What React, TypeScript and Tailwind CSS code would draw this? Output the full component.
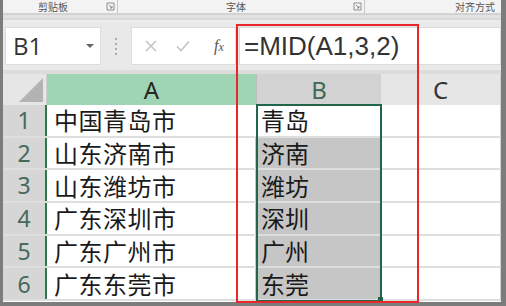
import React from "react";

const cn = '"Noto Sans CJK SC", sans-serif';

const rows = [
  ["中国青岛市", "青岛"],
  ["山东济南市", "济南"],
  ["山东潍坊市", "潍坊"],
  ["广东深圳市", "深圳"],
  ["广东广州市", "广州"],
  ["广东东莞市", "东莞"],
];

const Launcher = () => (
  <svg width="9" height="9" viewBox="0 0 9 9" className="text-[#777]">
    <path d="M1 8V1h7v7z" fill="none" stroke="currentColor" strokeWidth="0.8" />
    <path d="M3 3l3 3M6 4v2H4" fill="none" stroke="currentColor" strokeWidth="0.8" />
  </svg>
);

export default function App() {
  return (
    <div className="w-[506px] h-[306px] bg-[#7c7c7c] pl-[3px] pr-[5px] pb-[4px] overflow-hidden">
      <div className="relative h-full bg-[#e9e9e9] flex flex-col" style={{ fontFamily: cn }}>
        {/* ribbon group labels */}
        <div className="h-[13px] bg-[#f3f3f3] flex items-center text-[10px] leading-[12px] text-[#555]">
          <div className="w-[114px] flex items-center pl-[35px]">
            <span className="w-[68px]">剪贴板</span>
            <Launcher />
          </div>
          <div className="w-px h-full bg-[#c9c9c9]" />
          <div className="w-[246px] flex items-center">
            <span className="ml-[108px] w-[127px]">字体</span>
            <Launcher />
          </div>
          <div className="w-px h-full bg-[#c9c9c9]" />
          <div className="flex-1 text-right pr-[6px]">对齐方式</div>
        </div>
        <div className="h-[9px] flex flex-col">
          <div className="h-[2px] bg-[#d2d2d2]" />
          <div className="h-[3px] bg-[#e2e2e2]" />
          <div className="h-[2px] bg-[#d9d9d9]" />
          <div className="h-[2px] bg-[#ececec]" />
        </div>
        {/* formula bar */}
        <div className="h-[48px] flex items-center pt-[4px] pb-[4px]">
          <div className="ml-[2px] w-[96px] h-[38px] bg-white border border-[#dcdcdc] flex items-center justify-between pl-[7px] pr-[6px]">
            <span className="text-[24px] leading-none text-[#333]" style={{ fontFamily: '"Open Sans", sans-serif' }}>B1</span>
            <span className="w-0 h-0 border-l-[4px] border-r-[4px] border-t-[4px] border-l-transparent border-r-transparent border-t-[#666]" />
          </div>
          <div className="w-[30px] flex flex-col items-center gap-[3px]">
            <span className="w-[2px] h-[2px] bg-[#aaa]" />
            <span className="w-[2px] h-[2px] bg-[#aaa]" />
            <span className="w-[2px] h-[2px] bg-[#aaa]" />
            <span className="w-[2px] h-[2px] bg-[#aaa]" />
          </div>
          <div className="w-[105px] h-[38px] bg-white border border-[#dcdcdc] flex items-center">
            <svg width="12" height="12" viewBox="0 0 12 12" className="ml-[13px]">
              <path d="M1 1l10 10M11 1L1 11" stroke="#c4c4c4" strokeWidth="1.6" />
            </svg>
            <svg width="14" height="12" viewBox="0 0 14 12" className="ml-[19px]">
              <path d="M1 6.5l4 4L13 1.5" fill="none" stroke="#c4c4c4" strokeWidth="1.6" />
            </svg>
            <span className="ml-[24px] text-[16px] italic text-[#555]" style={{ fontFamily: '"Liberation Serif", serif' }}>
              f<span className="text-[12px]">x</span>
            </span>
          </div>
          <div className="ml-[3px] flex-1 h-[38px] bg-white border border-[#dcdcdc] flex items-center pl-[4px]">
            <span className="text-[26px] leading-none text-[#333]" style={{ fontFamily: '"Liberation Sans", sans-serif' }}>=MID(A1,3,2)</span>
          </div>
        </div>
        <div className="h-[4px] bg-[#dcdcdc]" />
        {/* grid */}
        <div className="flex-1 flex flex-col bg-white">
          <div className="h-[31px] flex bg-[#e6e6e6]">
            <div className="w-[44px] relative border-r border-[#cfcfcf]">
              <svg width="26" height="26" viewBox="0 0 26 26" className="absolute right-[2px] bottom-[2px]">
                <path d="M25 1V25H1z" fill="#b3b3b3" />
              </svg>
            </div>
            <div className="w-[209px] bg-[#9fd4b4] flex items-center justify-center text-[24px] text-[#262626]" style={{ fontFamily: '"Noto Sans", sans-serif' }}>A</div>
            <div className="w-[125px] bg-[#d2d2d2] border-l border-[#bdbdbd] flex items-center justify-center text-[24px] text-[#3f6a52]" style={{ fontFamily: '"Noto Sans", sans-serif' }}>B</div>
            <div className="flex-1 flex items-center justify-center text-[24px] text-[#333] border-r border-[#cfcfcf]" style={{ fontFamily: '"Noto Sans", sans-serif' }}>C</div>
          </div>
          {rows.map(([a, b], i) => (
            <div key={i} className="h-[32.7px] flex border-b-2 border-[#dedede]">
              <div className="w-[44px] bg-[#d6d6d6] flex items-center justify-center text-[23px] text-[#45695a] border-r-2 border-[#2f7a4d]" style={{ fontFamily: '"Noto Sans", sans-serif' }}>
                {i + 1}
              </div>
              <div className="w-[208px] flex items-center pl-[7px] text-[24px] tracking-[0.5px] text-[#1a1a1a]">{a}</div>
              <div className={`w-[125px] flex items-center pl-[6px] text-[24px] text-[#1a1a1a] ${i === 0 ? "bg-white" : "bg-[#c6c6c6]"}`}>{b}</div>
              <div className="flex-1 border-r border-[#cfcfcf]" />
            </div>
          ))}
        </div>

        {/* selection border B1:B6 */}
        <div className="absolute left-[253px] top-[104px] w-[126px] h-[198px] border-2 border-[#22664a] pointer-events-none" />
        <div className="absolute left-[375px] top-[297px] w-[5px] h-[5px] bg-[#22664a]" />
        {/* red annotation box */}
        <div className="absolute left-[233px] top-[24px] w-[183px] h-[279px] border-2 border-[#e8262b] pointer-events-none" />
      </div>
    </div>
  );
}
